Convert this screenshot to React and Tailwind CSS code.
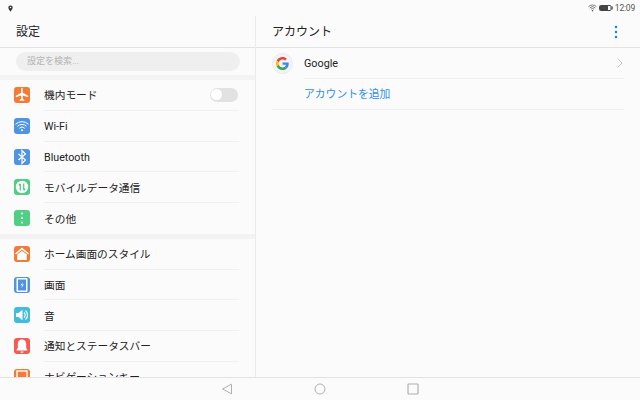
import React from "react";

const Plane = () => (
  <svg viewBox="0 0 16 16" className="w-[16px] h-[16px]"><path fill="#fff" d="M7.200 1.800c0-.6.4-1 .8-1s.8.4.8 1v4l5.400 3v1.400L8.800 8.600v3.200l1.500 1.100v1.100L8 13.400 5.700 14v-1.100l1.500-1.100V8.600L1.800 10.200V8.800l5.400-3z"/></svg>
);
const Wifi = () => (
  <svg viewBox="0 0 16 16" className="w-[16px] h-[16px]" fill="none" stroke="#fff" strokeWidth="1" strokeLinecap="round"><path d="M1.800 6a9 9 0 0 1 12.400 0"/><path d="M3.700 8a6.300 6.300 0 0 1 8.600 0"/><path d="M5.500 10a3.600 3.600 0 0 1 5 0"/><circle cx="8" cy="12.300" r="1" fill="#fff" stroke="none"/></svg>
);
const Bt = () => (
  <svg viewBox="0 0 16 16" className="w-[16px] h-[16px]" fill="none" stroke="#fff" strokeWidth="1.200"><path d="M4.500 5l7 6-3.500 3.500v-13L11.500 5l-7 6"/></svg>
);
const Data = () => (
  <svg viewBox="0 0 16 16" className="w-[16px] h-[16px]"><circle cx="8" cy="8" r="6.200" fill="#fff"/><path d="M6.300 11.500V5M4.900 6.300 6.300 4.800M9.700 4.500V11M9.700 11.200l1.400-1.500" stroke="#4fcf83" strokeWidth="1.300" fill="none"/></svg>
);
const Dots = () => (
  <svg viewBox="0 0 16 16" className="w-[16px] h-[16px]"><circle cx="8" cy="3.500" r="1.100" fill="#fff"/><circle cx="8" cy="8" r="1.100" fill="#fff"/><circle cx="8" cy="12.500" r="1.100" fill="#fff"/></svg>
);
const Home = () => (
  <svg viewBox="0 0 16 16" className="w-[16px] h-[16px]"><path d="M8 1.500 15 7.500 14 8.500 8 3.500 2 8.500 1 7.500z" fill="#fff"/><path d="M3.200 8.500 8 4.700l4.800 3.800v5.500H3.200z" fill="#fff"/></svg>
);
const Screen = () => (
  <svg viewBox="0 0 16 16" className="w-[16px] h-[16px]"><rect x="2.500" y="1" width="11" height="14" rx="1" fill="#fff"/><rect x="4" y="2.500" width="8" height="11" fill="#4f94e3"/><path d="M8.800 5 6.600 8.300h1.500l-.7 2.700 2.300-3.400H8.100z" fill="#fff"/></svg>
);
const Sound = () => (
  <svg viewBox="0 0 16 16" className="w-[16px] h-[16px]"><path d="M2 6h2.500L8.500 2.700v10.600L4.500 10H2z" fill="#fff"/><path d="M10 5.500a3.200 3.200 0 0 1 0 5M11.500 3.500a6 6 0 0 1 0 9" stroke="#fff" strokeWidth="1.100" fill="none"/></svg>
);
const Bell = () => (
  <svg viewBox="0 0 16 16" className="w-[16px] h-[16px]"><path d="M8 1.500c-2.600 0-4.200 2-4.200 4.500v4L2.500 12v.6h11V12l-1.300-2V6c0-2.500-1.600-4.500-4.200-4.500z" fill="#fff"/><path d="M6.500 13.400h3a1.500 1.500 0 0 1-3 0z" fill="#fff"/></svg>
);
const Nav = () => (
  <svg viewBox="0 0 16 16" className="w-[16px] h-[16px]"><rect x="3" y="2" width="10" height="8" fill="none" stroke="#fff" strokeWidth="1.400"/><path d="M2 12.500h12" stroke="#fff" strokeWidth="1.400"/></svg>
);

function Row({ bg, icon, label, last, children }) {
  return (
    <div className="flex h-[30.75px] shrink-0 pl-[14px] pr-[16px]">
      <div className={`w-[16px] h-[16px] rounded-[3px] mt-[7px] shrink-0 flex items-center justify-center overflow-hidden ${bg}`}>{icon}</div>
      <div className={`flex-1 ml-[14px] flex items-center justify-between text-[10.7px] text-[#222] ${last ? "" : "border-b border-[#f0f0f0]"}`}>
        <span className="pt-[3px]">{label}</span>
        {children}
      </div>
    </div>
  );
}

export default function App() {
  return (
    <div
      className="w-[640px] h-[400px] overflow-hidden flex flex-col bg-[#fbfbfb]"
      style={{ fontFamily: '"Roboto","Noto Sans CJK JP",sans-serif' }}
    >
      <div className="h-[16px] shrink-0 flex items-center justify-between pl-[8px] pr-[5px]">
        <svg viewBox="0 0 8 10" className="w-[5px] h-[7px]">
          <path fillRule="evenodd" fill="#333" d="M4 0a3.500 3.500 0 0 1 3.500 3.500C7.500 6 4 10 4 10S.5 6 .5 3.500A3.500 3.500 0 0 1 4 0zm0 2.300a1.200 1.200 0 1 0 0 2.400 1.200 1.200 0 0 0 0-2.400z" />
        </svg>
        <div className="flex items-center text-[8.500px] tracking-[-0.2px] leading-none text-[#555]">
          <svg viewBox="0 0 12 10" className="w-[9px] h-[8px] mr-[2px]" fill="none" stroke="#555" strokeWidth="1">
            <path d="M.7 3.200a7.500 7.500 0 0 1 10.600 0M2.300 5a5.200 5.200 0 0 1 7.400 0M3.900 6.700a3 3 0 0 1 4.200 0" />
            <circle cx="6" cy="8.700" r="1" fill="#555" stroke="none" />
          </svg>
          <svg viewBox="0 0 14 6" className="w-[14px] h-[6px] mr-[2px]">
            <rect x=".5" y=".5" width="11.500" height="5" rx="1" fill="none" stroke="#444" />
            <rect x="1" y="1" width="8" height="4" fill="#444" />
            <rect x="12.500" y="1.500" width="1.200" height="3" fill="#444" />
          </svg>
          <span>12:09</span>
        </div>
      </div>

      <div className="flex-1 min-h-0 flex">
        <div className="w-[256px] shrink-0 border-r border-[#ececec] flex flex-col overflow-hidden">
          <div className="h-[32px] shrink-0 border-b border-[#e2e2e2] pl-[16px] pt-[1px] flex items-center text-[12px] text-[#222]">設定</div>
          <div className="h-[27px] shrink-0 pt-[4px] pl-[16px]">
            <div className="w-[224px] h-[19px] rounded-full bg-[#efefef] pl-[11px] flex items-center text-[9px] text-[#b4b4b4]">設定を検索...</div>
          </div>
          <div className="h-[5px] shrink-0 bg-[#f3f3f3]" />
          <Row bg="bg-[#f47a36]" icon={<Plane />} label="機内モード">
            <div className="w-[28px] h-[14px] rounded-full bg-[#e2e2e2] mr-[1px] flex items-center pl-[1px]">
              <div className="w-[11px] h-[11px] rounded-full bg-white" />
            </div>
          </Row>
          <Row bg="bg-[#4f94e3]" icon={<Wifi />} label="Wi-Fi" />
          <Row bg="bg-[#4f94e3]" icon={<Bt />} label="Bluetooth" />
          <Row bg="bg-[#4fcf83]" icon={<Data />} label="モバイルデータ通信" />
          <Row bg="bg-[#4fcf83]" icon={<Dots />} label="その他" last />
          <div className="h-[5px] shrink-0 bg-[#f3f3f3]" />
          <Row bg="bg-[#f47a36]" icon={<Home />} label="ホーム画面のスタイル" />
          <Row bg="bg-[#4f94e3]" icon={<Screen />} label="画面" />
          <Row bg="bg-[#40bcdc]" icon={<Sound />} label="音" />
          <Row bg="bg-[#f8584f]" icon={<Bell />} label="通知とステータスバー" />
          <Row bg="bg-[#f47a36]" icon={<Nav />} label="ナビゲーションキー" />
        </div>

        <div className="flex-1 flex flex-col">
          <div className="h-[32px] shrink-0 border-b border-[#e2e2e2] pl-[16px] pr-[22px] flex items-center justify-between text-[12px] text-[#222]">
            <span className="pt-[1px]">アカウント</span>
            <svg viewBox="0 0 4 14" className="w-[4px] h-[14px]">
              <circle cx="2" cy="2" r="1.200" fill="#0a7cf5" />
              <circle cx="2" cy="7" r="1.200" fill="#0a7cf5" />
              <circle cx="2" cy="12" r="1.200" fill="#0a7cf5" />
            </svg>
          </div>
          <div className="h-[31px] shrink-0 flex pl-[16px] pr-[16px]">
            <div className="w-[21px] h-[21px] mt-[5px] rounded-full bg-[#f4f4f4] border border-[#ebebeb] flex items-center justify-center shrink-0">
              <svg viewBox="0 0 48 48" className="w-[13px] h-[13px]">
                <path fill="#EA4335" d="M24 9.500c3.500 0 6.700 1.200 9.200 3.600l6.900-6.900C35.900 2.400 30.500 0 24 0 14.600 0 6.500 5.400 2.600 13.200l8 6.200C12.400 13.700 17.700 9.500 24 9.500z" />
                <path fill="#4285F4" d="M47 24.500c0-1.600-.1-3.100-.4-4.500H24v9h12.900c-.6 3-2.200 5.500-4.700 7.200l7.700 6c4.500-4.200 7.100-10.300 7.100-17.700z" />
                <path fill="#FBBC05" d="M10.500 28.600c-.5-1.400-.8-3-.8-4.600s.3-3.200.8-4.600l-8-6.200C.9 16.500 0 20.100 0 24s.9 7.500 2.600 10.800z" />
                <path fill="#34A853" d="M24 48c6.500 0 11.900-2.100 15.900-5.800l-7.700-6c-2.200 1.400-4.900 2.300-8.200 2.300-6.300 0-11.600-4.200-13.500-9.900l-8 6.200C6.500 42.600 14.600 48 24 48z" />
              </svg>
            </div>
            <div className="flex-1 ml-[11px] border-b border-[#f0f0f0] flex items-center justify-between text-[10.8px] text-[#222]">
              <span className="pt-[2px]">Google</span>
              <svg viewBox="0 0 6 10" className="w-[6px] h-[10px] mr-[1px]" fill="none" stroke="#c4c4c4" strokeWidth="1">
                <path d="M.7.700 5 5 .7 9.300" />
              </svg>
            </div>
          </div>
          <div className="h-[31px] shrink-0 mx-[16px] border-b border-[#f0f0f0] pl-[32px] flex items-center text-[10.8px] text-[#2f8fee]">
            <span className="pt-[2px]">アカウントを追加</span>
          </div>
        </div>
      </div>

      <div className="h-[23px] shrink-0 border-t border-[#e2e2e2] bg-[#fbfbfb] flex items-center pl-[221px]">
        <svg viewBox="0 0 12 12" className="w-[12px] h-[12px]" fill="none" stroke="#b0b0b0" strokeWidth="1">
          <path d="M10.500 1.200v9.600L1.500 6z" />
        </svg>
        <svg viewBox="0 0 12 12" className="w-[12px] h-[12px] ml-[81px]" fill="none" stroke="#b0b0b0" strokeWidth="1">
          <circle cx="6" cy="6" r="5" />
        </svg>
        <svg viewBox="0 0 12 12" className="w-[12px] h-[12px] ml-[81px]" fill="none" stroke="#b0b0b0" strokeWidth="1.200">
          <rect x="1" y="1" width="10" height="10" rx=".5" />
        </svg>
      </div>
    </div>
  );
}
